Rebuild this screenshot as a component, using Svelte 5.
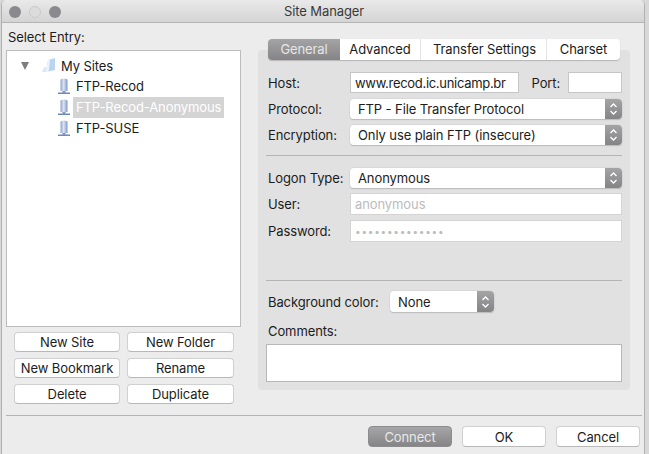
<script>
  const tabs = ['General', 'Advanced', 'Transfer Settings', 'Charset'];
  const sites = ['FTP-Recod', 'FTP-Recod-Anonymous', 'FTP-SUSE'];
  const actions = ['New Site', 'New Folder', 'New Bookmark', 'Rename', 'Delete', 'Duplicate'];
</script>

{#snippet stepper()}
  <span class="stepper">
    <svg width="9" height="14" viewBox="0 0 9 14" fill="none" stroke="#fff" stroke-width="1.3">
      <path d="M1.5 5 4.5 2 7.5 5" />
      <path d="M1.5 9 4.5 12 7.5 9" />
    </svg>
  </span>
{/snippet}

{#snippet serverIcon()}
  <svg class="server" width="14" height="17" viewBox="0 0 14 17">
    <defs>
      <linearGradient id="tower" x1="0" x2="1" y1="0" y2="0">
        <stop offset="0" stop-color="#8ea4cc" />
        <stop offset="0.45" stop-color="#dbe4f3" />
        <stop offset="1" stop-color="#7f97c4" />
      </linearGradient>
    </defs>
    <path d="M3.5 1.5Q7 -0.5 10.5 1.5V13H3.5z" fill="url(#tower)" />
    <path d="M1 14.5h12v1.5H1z" fill="#6f88b8" />
    <path d="M5.5 13h3v2h-3z" fill="#7f97c4" />
  </svg>
{/snippet}

<div class="window">
  <header class="titlebar">
    <div class="lights">
      <span class="light"></span>
      <span class="light off"></span>
      <span class="light"></span>
    </div>
    <span class="title">Site Manager</span>
  </header>

  <div class="body">
    <section class="left">
      <div class="select-label">Select Entry:</div>
      <div class="tree">
        <div class="tree-root">
          <span class="arrow"></span>
          <svg class="folder" width="16" height="17" viewBox="0 0 16 17">
            <path d="M5 15 7 3 14 1v12z" fill="#b9d5f3" />
            <path d="M5 15 7 3 9 2.4 7.5 15z" fill="#eef5fc" />
            <path d="M1 15 3 10h3l-1 5z" fill="#dce9f7" />
          </svg>
          <span>My Sites</span>
        </div>
        {#each sites as site, i}
          <div class="tree-item">
            {@render serverIcon()}
            <span class="site" class:selected={i === 1}>{site}</span>
          </div>
        {/each}
      </div>
      <div class="actions">
        {#each actions as action}
          <button class="btn" type="button">{action}</button>
        {/each}
      </div>
    </section>

    <section class="right">
      <div class="tabs">
        {#each tabs as tab, i}
          <div class="tab" class:active={i === 0}>{tab}</div>
        {/each}
      </div>
      <div class="panel">
        <div class="row host-row">
          <span class="label">Host:</span>
          <div class="input host">www.recod.ic.unicamp.br</div>
          <span class="port-label">Port:</span>
          <div class="input port"></div>
        </div>
        <div class="row select-row">
          <span class="label">Protocol:</span>
          <div class="select grow"><span>FTP - File Transfer Protocol</span>{@render stepper()}</div>
        </div>
        <div class="row select-row">
          <span class="label">Encryption:</span>
          <div class="select grow"><span>Only use plain FTP (insecure)</span>{@render stepper()}</div>
        </div>
        <hr class="first" />
        <div class="row select-row">
          <span class="label">Logon Type:</span>
          <div class="select grow"><span>Anonymous</span>{@render stepper()}</div>
        </div>
        <div class="row field-row">
          <span class="label">User:</span>
          <div class="input grow disabled">anonymous</div>
        </div>
        <div class="row field-row">
          <span class="label">Password:</span>
          <div class="input grow disabled dots">••••••••••••••</div>
        </div>
        <hr class="second" />
        <div class="row bg-row">
          <span class="bg-label">Background color:</span>
          <div class="select bg"><span>None</span>{@render stepper()}</div>
        </div>
        <div class="comments-label">Comments:</div>
        <div class="comments"></div>
      </div>
    </section>
  </div>

  <footer class="footer">
    <button class="btn wide primary" type="button">Connect</button>
    <button class="btn wide" type="button">OK</button>
    <button class="btn wide" type="button">Cancel</button>
  </footer>
</div>

<style>
  :global(body) {
    background: #d8d8d8;
    overflow: hidden;
  }

  .window {
    width: 644px;
    height: 454px;
    margin-left: 1px;
    box-sizing: border-box;
    background: #ececec;
    color: #1c1c1c;
    font-family: Inter, "Liberation Sans", sans-serif;
    font-size: 13px;
    letter-spacing: -0.1px;
    display: flex;
    flex-direction: column;
    border-radius: 5px 5px 0 0;
    border-left: 1px solid #b0b0b0;
    border-right: 1px solid #b0b0b0;
  }

  .titlebar {
    height: 23px;
    box-sizing: border-box;
    display: flex;
    align-items: center;
    justify-content: center;
    position: relative;
    background: linear-gradient(#e9e9e9, #d4d4d4);
    border-bottom: 1px solid #b4b4b4;
    border-radius: 5px 5px 0 0;
  }

  .title {
    color: #3a3a3a;
    font-size: 13px;
    margin-left: 2px;
  }

  .lights {
    position: absolute;
    left: 7px;
    top: 6px;
    display: flex;
    gap: 8px;
  }

  .light {
    width: 12px;
    height: 12px;
    border-radius: 50%;
    background: #8a8a8e;
  }

  .light.off {
    background: #dcdcdc;
    border: 1px solid #cacaca;
    box-sizing: border-box;
  }

  .body {
    display: flex;
    height: 392px;
  }

  .left {
    width: 235px;
    margin-left: 4px;
  }

  .select-label {
    margin: 6px 0 0 2px;
    height: 21px;
    line-height: 16px;
  }

  .tree {
    height: 277px;
    box-sizing: border-box;
    background: #fff;
    border: 1px solid #bdbdbd;
    padding-top: 4px;
  }

  .tree-root,
  .tree-item {
    display: flex;
    align-items: center;
    height: 21px;
  }

  .tree-root {
    padding-left: 14px;
  }

  .arrow {
    width: 0;
    height: 0;
    border-left: 4.5px solid transparent;
    border-right: 4.5px solid transparent;
    border-top: 8px solid #7d7d7d;
    margin-right: 12px;
  }

  .folder {
    margin-right: 4px;
  }

  .tree-item {
    padding-left: 50px;
  }

  .server {
    margin-right: 2px;
  }

  .site {
    padding: 0 3px;
    line-height: 21px;
  }

  .site.selected {
    background: #d4d4d4;
    color: #fff;
  }

  .actions {
    display: grid;
    grid-template-columns: 106px 107px;
    column-gap: 7px;
    row-gap: 6px;
    margin: 5px 0 0 8px;
  }

  .btn {
    height: 20px;
    padding: 0;
    background: #fff;
    border: 1px solid #d0d0d0;
    border-bottom-color: #b8b8b8;
    border-radius: 4px;
    font: inherit;
    letter-spacing: inherit;
    color: #1c1c1c;
    white-space: nowrap;
  }

  .right {
    width: 372px;
    margin-left: 17px;
    padding-top: 16px;
  }

  .tabs {
    display: flex;
    width: 352px;
    height: 21px;
    margin: 0 0 -10px 10px;
    position: relative;
    background: #fff;
    border-radius: 4px;
    box-shadow: 0 1px 1px #b4b4b4;
  }

  .tab {
    text-align: center;
    line-height: 20px;
    border-right: 1px solid #e4e4e4;
    box-sizing: border-box;
    width: 81px;
  }

  .tab:nth-child(1) { width: 72px; }
  .tab:nth-child(3) { width: 126px; padding-left: 2px; }
  .tab:nth-child(4) { width: 73px; border-right: 0; }

  .tab.active {
    background: linear-gradient(#a4a4a6, #848486);
    color: #e6e6e6;
    border-radius: 4px 0 0 4px;
    border-right: 0;
  }

  .panel {
    height: 340px;
    box-sizing: border-box;
    background: #e1e1e1;
    border-radius: 4px;
    padding: 22px 8px 0;
  }

  .row {
    display: flex;
    align-items: center;
  }

  .label {
    width: 84px;
    flex-shrink: 0;
    padding-left: 2px;
    box-sizing: border-box;
  }

  .host-row { height: 21px; }
  .select-row { height: 20px; margin-top: 6px; }
  .field-row { height: 22px; margin-top: 5px; }

  .input {
    height: 100%;
    box-sizing: border-box;
    background: #fff;
    border: 1px solid #c6c6c6;
    padding-left: 4px;
    line-height: 20px;
    width: 169px;
  }

  .input.host {
    letter-spacing: -0.3px;
  }

  .port-label {
    margin: 0 8px 0 13px;
  }

  .input.port {
    width: 54px;
  }

  .grow {
    flex: 1;
  }

  .disabled {
    color: #bcbcbc;
    border-color: #d4d4d4;
  }

  .dots {
    font-size: 10px;
    letter-spacing: 0.75px;
  }

  .select {
    height: 100%;
    box-sizing: border-box;
    display: flex;
    align-items: center;
    justify-content: space-between;
    background: #fff;
    border-radius: 4px;
    box-shadow: 0 0 0 0.5px #cfcfcf, 0 1px 1px #a8a8a8;
    padding-left: 8px;
    overflow: hidden;
  }

  .stepper {
    width: 17px;
    height: 100%;
    display: flex;
    align-items: center;
    justify-content: center;
    background: linear-gradient(#a4a4a6, #848486);
  }

  hr {
    margin: 0;
    border: 0;
    border-top: 1px solid #b4b4b4;
  }

  hr.first { margin-top: 10px; margin-bottom: 12px; }
  hr.second { margin-top: 38px; }

  .bg-row {
    height: 21px;
    margin-top: 10px;
  }

  .bg-label {
    width: 124px;
    flex-shrink: 0;
    padding-left: 2px;
    box-sizing: border-box;
  }

  .select.bg {
    width: 104px;
  }

  .comments-label {
    margin: 11px 0 0 2px;
    height: 21px;
    line-height: 16px;
  }

  .comments {
    height: 38px;
    background: #fff;
    border: 1px solid #b8b8b8;
    box-sizing: border-box;
  }

  .footer {
    display: flex;
    justify-content: flex-end;
    gap: 10px;
    margin: 0 2px 0 4px;
    height: 38px;
    padding: 10px 2px 0 0;
    box-sizing: border-box;
    border-top: 1px solid #b4b4b4;
  }

  .btn.wide {
    width: 84px;
    height: 21px;
  }

  .btn.primary {
    background: linear-gradient(#a6a6a8, #858587);
    border-color: #8c8c8c;
    color: #e8e8e8;
  }
</style>
